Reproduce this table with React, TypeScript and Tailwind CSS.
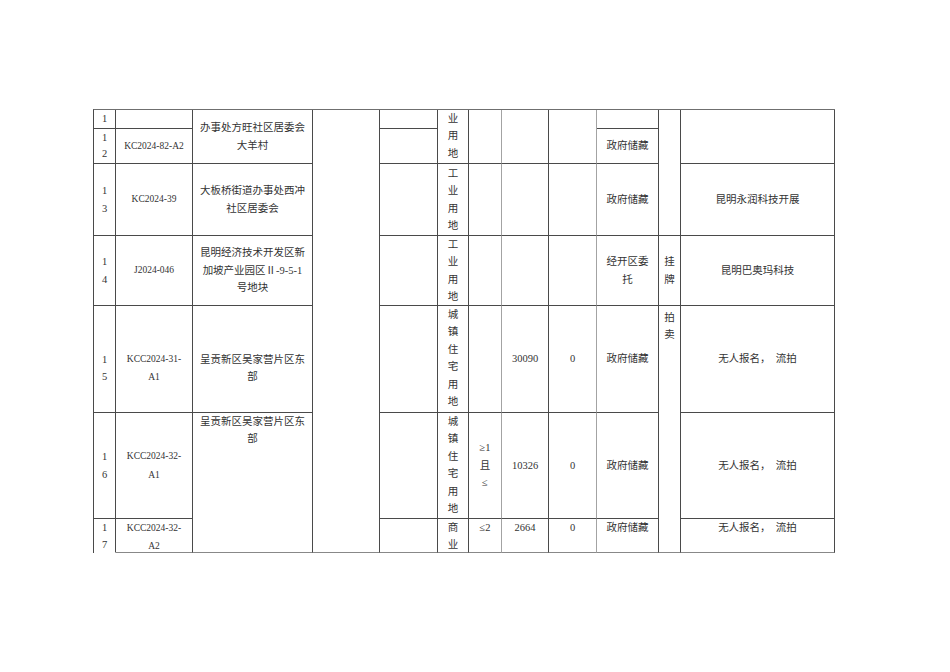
import React from 'react';

type CellProps = {
  children?: React.ReactNode;
  rowSpan?: number;
  top?: boolean;
  gray?: boolean;
  clip?: boolean;
  className?: string;
};

const Cell = ({ children, rowSpan, top, gray, clip, className = '' }: CellProps) => (
  <td
    rowSpan={rowSpan}
    className={`p-0 text-center border-r border-b ${gray ? 'border-r-[#a3a3a3]' : 'border-r-[#4a4a4a]'} border-b-[#4a4a4a] ${top ? 'align-top' : 'align-middle'} ${className}`}
  >
    {clip ? <div className="h-[33px] overflow-hidden">{children}</div> : children}
  </td>
);

const Code = ({ children }: { children: React.ReactNode }) => (
  <span className="text-[9.5px]">{children}</span>
);

const widths = [22, 77, 120, 67, 58, 31, 33, 47, 48, 62, 22, 154];

export default function App() {
  return (
    <div className="w-[950px] h-[672px] bg-white pt-[109px] pl-[93px]">
      <table className="table-fixed w-[742px] border-separate border-spacing-0 border-t border-l border-t-[#6f6f6f] border-l-[#4a4a4a] text-[10.5px] leading-[17.4px] text-[#333] font-[family-name:'Liberation_Serif','Noto_Sans_CJK_SC',serif]">
        <colgroup>
          {widths.map((w, i) => (
            <col key={i} style={{ width: w }} />
          ))}
        </colgroup>
        <tbody>
          <tr className="h-[19px]">
            <Cell>1</Cell>
            <Cell />
            <Cell rowSpan={2}>
              办事处方旺社区居委会
              <br />
              大羊村
            </Cell>
            <Cell rowSpan={7} className="border-b-[#888]" />
            <Cell />
            <Cell rowSpan={2} top>
              业<br />用<br />地
            </Cell>
            <Cell rowSpan={2} gray />
            <Cell rowSpan={2} />
            <Cell rowSpan={2} gray />
            <Cell />
            <Cell rowSpan={3} />
            <Cell rowSpan={2} />
          </tr>
          <tr className="h-[35px]">
            <Cell className="leading-[16.5px]">
              1<br />2
            </Cell>
            <Cell>
              <Code>KC2024-82-A2</Code>
            </Cell>
            <Cell />
            <Cell>政府储藏</Cell>
          </tr>
          <tr className="h-[72px]">
            <Cell>
              1<br />3
            </Cell>
            <Cell>
              <Code>KC2024-39</Code>
            </Cell>
            <Cell>
              大板桥街道办事处西冲
              <br />
              社区居委会
            </Cell>
            <Cell />
            <Cell>
              工<br />业<br />用<br />地
            </Cell>
            <Cell gray />
            <Cell />
            <Cell gray />
            <Cell>政府储藏</Cell>
            <Cell>昆明永润科技开展</Cell>
          </tr>
          <tr className="h-[70px]">
            <Cell>
              1<br />4
            </Cell>
            <Cell>
              <Code>J2024-046</Code>
            </Cell>
            <Cell>
              昆明经济技术开发区新
              <br />
              加坡产业园区Ⅱ-9-5-1
              <br />
              号地块
            </Cell>
            <Cell />
            <Cell className="leading-[17.1px]">
              工<br />业<br />用<br />地
            </Cell>
            <Cell gray />
            <Cell />
            <Cell gray />
            <Cell>
              经开区委
              <br />
              托
            </Cell>
            <Cell>
              挂<br />牌
            </Cell>
            <Cell>昆明巴奥玛科技</Cell>
          </tr>
          <tr className="h-[107px]">
            <Cell className="pt-[18px]">
              1<br />5
            </Cell>
            <Cell className="pt-[18px]">
              <Code>
                KCC2024-31-
                <br />
                A1
              </Code>
            </Cell>
            <Cell className="pt-[18px]">
              呈贡新区吴家营片区东
              <br />
              部
            </Cell>
            <Cell />
            <Cell top>
              城<br />镇<br />住<br />宅<br />用<br />地
            </Cell>
            <Cell gray />
            <Cell>30090</Cell>
            <Cell gray>0</Cell>
            <Cell>政府储藏</Cell>
            <Cell rowSpan={3} top className="pt-[3px] border-b-[#888]">
              拍<br />卖
            </Cell>
            <Cell>无人报名，&nbsp;&nbsp;流拍</Cell>
          </tr>
          <tr className="h-[106px]">
            <Cell>
              1<br />6
            </Cell>
            <Cell>
              <Code>
                KCC2024-32-
                <br />
                A1
              </Code>
            </Cell>
            <Cell rowSpan={2} top className="border-b-[#888]">
              呈贡新区吴家营片区东
              <br />
              部
            </Cell>
            <Cell />
            <Cell top>
              城<br />镇<br />住<br />宅<br />用<br />地
            </Cell>
            <Cell gray>
              ≥1
              <br />
              且
              <br />≤
            </Cell>
            <Cell>10326</Cell>
            <Cell gray>0</Cell>
            <Cell>政府储藏</Cell>
            <Cell>无人报名，&nbsp;&nbsp;流拍</Cell>
          </tr>
          <tr className="h-[34px]">
            <Cell top clip className="border-b-transparent">
              1<br />7
            </Cell>
            <Cell top clip className="border-b-[#888]">
              <Code>
                KCC2024-32-
                <br />
                A2
              </Code>
            </Cell>
            <Cell top clip className="border-b-[#888]" />
            <Cell top clip className="border-b-[#888]">
              商<br />业
            </Cell>
            <Cell top clip gray className="border-b-[#888]">
              ≤2
            </Cell>
            <Cell top clip className="border-b-[#888]">
              2664
            </Cell>
            <Cell top clip gray className="border-b-[#888]">
              0
            </Cell>
            <Cell top clip className="border-b-[#888]">
              政府储藏
            </Cell>
            <Cell top clip className="border-b-[#888]">
              无人报名，&nbsp;&nbsp;流拍
            </Cell>
          </tr>
        </tbody>
      </table>
    </div>
  );
}
